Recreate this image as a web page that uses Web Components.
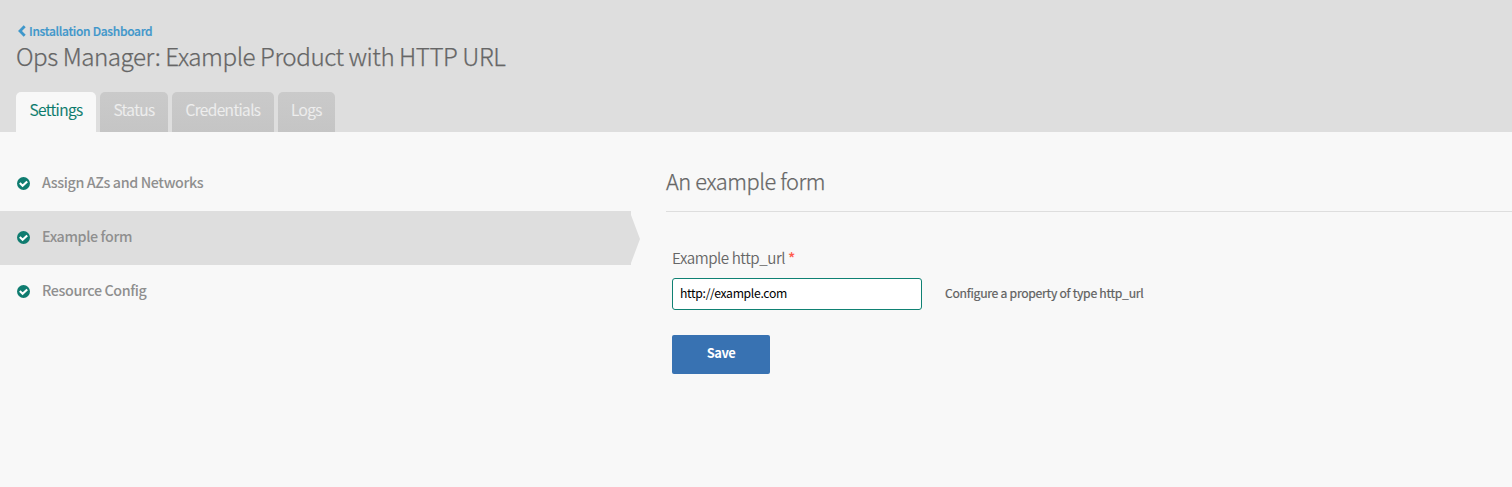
<!DOCTYPE html>
<html lang="en">
<head>
<meta charset="utf-8">
<title>Ops Manager</title>
<style>
html, body { margin: 0; height: 100%; }
body { background: #f8f8f8; color: #666; font-family: "Noto Sans CJK SC", "Noto Sans", sans-serif; overflow: hidden; }
</style>
</head>
<body>
<ops-page></ops-page>
<script>
const define = (name, html) => customElements.define(name, class extends HTMLElement {
  constructor() { super(); this.attachShadow({ mode: 'open' }).innerHTML = html; }
});

define('back-link', `
<style>
:host { display: flex; align-items: center; height: 18px; color: #3e97cb; font-size: 12px; font-weight: 500; line-height: 18px; letter-spacing: -0.31px; white-space: nowrap; -webkit-text-stroke: 0.2px currentColor; }
svg { display: block; width: 8px; height: 12px; margin: 0 3px 0 2px; }
</style>
<svg viewBox="0 0 8 12"><path d="M6.7 1.2 2 6l4.7 4.8" fill="none" stroke="currentColor" stroke-width="2.8"/></svg><span><slot></slot></span>`);

define('page-title', `
<style>
:host { display: block; font-size: 24.2px; font-weight: 300; line-height: 31px; color: #666; white-space: nowrap; letter-spacing: -0.46px; -webkit-text-stroke: 0.25px currentColor; }
</style><slot></slot>`);

define('nav-tab', `
<style>
:host { display: block; box-sizing: border-box; height: 40px; border-radius: 5px 5px 0 0; background: linear-gradient(#cacaca, #c5c5c5); color: #eee; font-size: 15.5px; font-weight: 350; line-height: 35px; letter-spacing: -0.6px; text-align: center; white-space: nowrap; -webkit-text-stroke: 0.15px currentColor; }
:host([active]) { background: #f8f8f8; color: #0a7a6b; }
</style><slot></slot>`);

define('page-header', `
<style>
:host { display: flex; flex-direction: column; box-sizing: border-box; height: 132px; padding: 22px 16px 0; background: #dedede; }
.tabs { display: flex; gap: 4px; margin-top: auto; }
</style>
<slot name="back"></slot><slot name="title"></slot><div class="tabs"><slot name="tab"></slot></div>`);

define('side-item', `
<style>
:host { display: flex; align-items: center; box-sizing: border-box; height: 54px; width: 631px; padding: 0 0 2px 17px; color: #8f8f8f; font-size: 14.3px; font-weight: 500; position: relative; }
:host([active]) { background: #dedede; }
:host([active])::after { content: ""; position: absolute; left: 100%; top: 0; width: 9px; height: 54px; background: #dedede; clip-path: polygon(0 4px, 100% 28px, 0 52px); }
svg { display: block; width: 13px; height: 13px; margin: 1px 12px 0 0; }
span { line-height: 20px; margin-top: -2px; letter-spacing: -0.38px; white-space: nowrap; }
</style>
<svg viewBox="0 0 13 13"><circle cx="6.5" cy="6.5" r="6.5" fill="#0f7c70"/><path d="M2.8 6.1 5.6 8.8 10.2 4.4" fill="none" stroke="#fff" stroke-width="2.1"/></svg><span><slot></slot></span>`);

define('side-nav', `
<style>:host { display: block; width: 640px; padding-top: 25px; flex: none; }</style><slot></slot>`);

define('form-field', `
<style>
:host { display: block; padding: 33px 0 0 6px; }
.label { font-size: 15.2px; font-weight: 350; line-height: 24px; height: 24px; color: #666; letter-spacing: -0.46px; white-space: nowrap; }
.label b { color: #ff5c4d; font-weight: 500; margin-left: 3px; }
.row { display: flex; align-items: center; margin-top: 9px; }
input { box-sizing: border-box; width: 250px; height: 32px; margin: 0 23px 0 0; padding: 0 7px 3px 7px; border: 1px solid #0f8173; border-radius: 3px; background: #fff; color: #000; font: 400 12.2px "Noto Sans CJK SC", "Noto Sans", sans-serif; letter-spacing: -0.32px; outline: none; }
.hint { font-size: 12.2px; line-height: 18px; color: #606060; letter-spacing: -0.27px; margin-top: -2px; white-space: nowrap; -webkit-text-stroke: 0.2px currentColor; }
</style>
<div class="label"><slot name="label"></slot><b>*</b></div>
<div class="row"><input type="text" value="http://example.com"><div class="hint"><slot name="hint"></slot></div></div>`);

define('save-button', `
<style>
:host { display: block; margin: 25px 0 0 6px; }
button { display: block; width: 98px; height: 39px; border: 0; border-radius: 2px; padding: 0 0 3px; background: #3872b2; color: #fff; font: 700 12.9px/36px "Noto Sans CJK SC", "Noto Sans", sans-serif; letter-spacing: -0.5px; }
</style><button><slot></slot></button>`);

define('form-panel', `
<style>
:host { display: block; flex: 1; margin-left: 26px; padding-top: 30px; min-width: 0; }
.head { box-sizing: border-box; height: 50px; border-bottom: 1px solid #dedede; font-size: 21.8px; font-weight: 300; line-height: 38px; letter-spacing: -0.45px; color: #666; white-space: nowrap; -webkit-text-stroke: 0.25px currentColor; }
</style>
<div class="head"><slot name="heading"></slot></div><slot></slot>`);

define('ops-page', `
<style>:host { display: block; } main { display: flex; }</style>
<page-header>
  <back-link slot="back">Installation Dashboard</back-link>
  <page-title slot="title">Ops Manager: Example Product with HTTP URL</page-title>
  <nav-tab slot="tab" active style="width:80px">Settings</nav-tab>
  <nav-tab slot="tab" style="width:68px">Status</nav-tab>
  <nav-tab slot="tab" style="width:102px">Credentials</nav-tab>
  <nav-tab slot="tab" style="width:57px">Logs</nav-tab>
</page-header>
<main>
  <side-nav>
    <side-item>Assign AZs and Networks</side-item>
    <side-item active>Example form</side-item>
    <side-item>Resource Config</side-item>
  </side-nav>
  <form-panel>
    <span slot="heading">An example form</span>
    <form-field><span slot="label">Example http_url</span><span slot="hint">Configure a property of type http_url</span></form-field>
    <save-button>Save</save-button>
  </form-panel>
</main>`);
</script>
</body>
</html>
